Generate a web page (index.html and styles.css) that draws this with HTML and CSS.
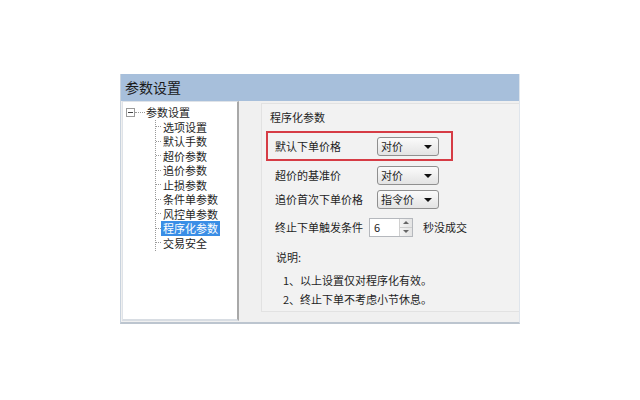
FILE: index.html
```html
<!DOCTYPE html>
<html lang="zh-CN">
<head>
    <meta charset="UTF-8">
    <title>参数设置</title>
    <link rel="stylesheet" href="styles.css">
</head>
<body>
    <div class="window">
        <div class="titlebar">参数设置</div>
        <div class="body">
            <div class="tree">
                <div class="root"><span class="toggle"></span><span class="stub"></span>参数设置</div>
                <ul class="children">
                    <li><span>选项设置</span></li>
                    <li><span>默认手数</span></li>
                    <li><span>超价参数</span></li>
                    <li><span>追价参数</span></li>
                    <li><span>止损参数</span></li>
                    <li><span>条件单参数</span></li>
                    <li><span>风控单参数</span></li>
                    <li class="selected"><span>程序化参数</span></li>
                    <li><span>交易安全</span></li>
                </ul>
            </div>
            <div class="content">
                <div class="group">
                    <div class="group-title">程序化参数</div>
                    <div class="row highlight">
                        <span class="label">默认下单价格</span>
                        <div class="select">对价<i class="arrow"></i></div>
                    </div>
                    <div class="row">
                        <span class="label">超价的基准价</span>
                        <div class="select">对价<i class="arrow"></i></div>
                    </div>
                    <div class="row">
                        <span class="label">追价首次下单价格</span>
                        <div class="select">指令价<i class="arrow"></i></div>
                    </div>
                    <div class="row spin-row">
                        <span>终止下单触发条件</span>
                        <div class="spin">
                            <span class="spin-value">6</span>
                            <div class="spin-btns">
                                <i class="up"></i>
                                <i class="down"></i>
                            </div>
                        </div>
                        <span class="unit">秒没成交</span>
                    </div>
                    <div class="notes-title">说明:</div>
                    <div class="note">1、以上设置仅对程序化有效。</div>
                    <div class="note">2、终止下单不考虑小节休息。</div>
                </div>
            </div>
        </div>
    </div>
</body>
</html>
```

FILE: styles.css
```css
* {
    margin: 0;
    padding: 0;
    box-sizing: border-box;
}

body {
    width: 640px;
    height: 400px;
    background-color: #fff;
    padding: 74px 0 0 120px;
    font-family: "Noto Sans CJK SC", "DejaVu Sans", sans-serif;
    font-size: 11px;
    color: #1e1e1e;
}

.window {
    width: 400px;
    height: 250px;
    border-left: 1px solid #c9d3de;
    border-right: 1px solid #dfe5ec;
    border-bottom: 2px solid #bcc5cf;
    background-color: #f0f0f0;
    display: flex;
    flex-direction: column;
}

.titlebar {
    height: 27px;
    line-height: 27px;
    padding-left: 4px;
    background-color: #a7bfdb;
    font-size: 14px;
    color: #1a1a1a;
}

.body {
    flex: 1;
    display: flex;
    padding: 0 0 1px 1px;
}

.tree {
    width: 117px;
    background-color: #fff;
    border: 1px solid #dfe3e8;
    border-right: 2px solid #a8a8a8;
    border-bottom: 2px solid #d8dde3;
    padding: 3px 0 0 3px;
    line-height: 14.5px;
}

.root {
    display: flex;
    align-items: center;
}

.toggle {
    width: 9px;
    height: 9px;
    border: 1px solid #9a9a9a;
    position: relative;
}

.toggle::after {
    content: "";
    position: absolute;
    left: 1px;
    top: 3px;
    width: 5px;
    height: 1px;
    background-color: #444;
}

.stub {
    width: 10px;
    border-top: 1px dotted #999;
    margin: 0 1px 0 0;
}

.children {
    list-style: none;
    margin-left: 29px;
    border-left: 1px dotted #999;
    margin-top: 0;
    height: 131px;
}

.children li {
    display: flex;
    align-items: center;
    height: 14.5px;
}

.children li::before {
    content: "";
    width: 5px;
    border-top: 1px dotted #999;
}

.children li span {
    padding: 0 2px;
}

.children li.selected span {
    background-color: #3a8ee6;
    color: #fff;
}

.content {
    flex: 1;
    padding: 2px 0 9px 22px;
}

.group {
    height: 100%;
    border: 1px solid #e2e2e2;
    border-right: none;
    background-color: #f2f2f2;
    padding: 6px 0 0 4px;
}

.group-title {
    line-height: 14px;
    padding-left: 4px;
    margin-bottom: 7px;
}

.row {
    display: flex;
    align-items: center;
    height: 22px;
    padding-left: 9px;
    margin-top: 2px;
}

.row.highlight {
    width: 187px;
    height: 30px;
    border: 2px solid #d63c45;
    padding-left: 7px;
    margin-top: 0;
    margin-bottom: 3px;
}

.label {
    width: 102px;
}

.row.highlight .label {
    width: 102px;
}

.select {
    width: 62px;
    height: 19px;
    border: 1px solid #8f8f8f;
    border-radius: 3px;
    background: linear-gradient(#fbfbfb, #e3e3e3);
    padding-left: 3px;
    line-height: 17px;
    position: relative;
}

.arrow {
    position: absolute;
    right: 6px;
    top: 7px;
    border-left: 4px solid transparent;
    border-right: 4px solid transparent;
    border-top: 4px solid #111;
}

.spin-row {
    margin-top: 6px;
}

.spin {
    width: 44px;
    height: 19px;
    margin-left: 6px;
    border: 1px solid #b5b8bd;
    background-color: #fff;
    display: flex;
}

.spin-value {
    flex: 1;
    padding-left: 4px;
    line-height: 17px;
}

.spin-btns {
    width: 13px;
    display: flex;
    flex-direction: column;
    border-left: 1px solid #d0d0d0;
    background: linear-gradient(90deg, #f4f4f4, #e4e4e4);
}

.spin-btns i {
    flex: 1;
    position: relative;
}

.spin-btns i.up {
    border-bottom: 1px solid #cfcfcf;
}

.spin-btns i::after {
    content: "";
    position: absolute;
    left: 3px;
    top: 2px;
    border-left: 3px solid transparent;
    border-right: 3px solid transparent;
}

.spin-btns i.up::after {
    border-bottom: 3px solid #666;
}

.spin-btns i.down::after {
    border-top: 3px solid #666;
}

.unit {
    margin-left: 10px;
}

.notes-title {
    line-height: 14px;
    padding-left: 10px;
    margin-top: 12px;
}

.note {
    line-height: 14px;
    padding-left: 17px;
    margin-top: 9px;
}

.note + .note {
    margin-top: 5px;
}
```
